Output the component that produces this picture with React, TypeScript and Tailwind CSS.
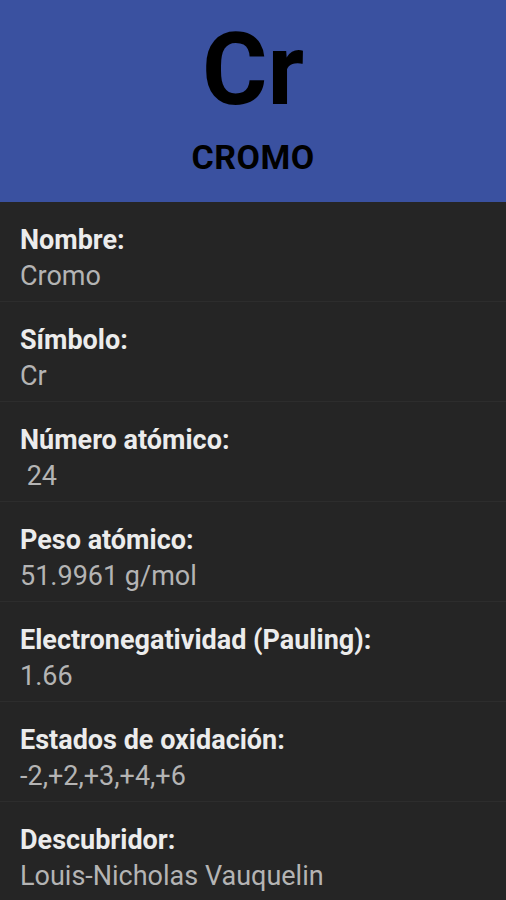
const filas = [
  { etiqueta: 'Nombre:', valor: 'Cromo' },
  { etiqueta: 'Símbolo:', valor: 'Cr' },
  { etiqueta: 'Número atómico:', valor: ' 24' },
  { etiqueta: 'Peso atómico:', valor: '51.9961 g/mol' },
  { etiqueta: 'Electronegatividad (Pauling):', valor: '1.66' },
  { etiqueta: 'Estados de oxidación:', valor: '-2,+2,+3,+4,+6' },
  { etiqueta: 'Descubridor:', valor: 'Louis-Nicholas Vauquelin' },
]

export default function App() {
  return (
    <div className="w-[506px] h-[900px] overflow-hidden bg-[#252525] font-['Roboto',sans-serif]">
      {/* CABECERA */}
      <div className="h-[202px] bg-[#3a51a0] flex flex-col items-center pt-[20px]">
        <div className="text-[100px] leading-[100px] font-bold text-black">Cr</div>
        <div className="mt-[20px] text-[34px] leading-[34px] font-bold text-black tracking-[0.5px]">CROMO</div>
      </div>

      {/* DATOS */}
      <div className="flex flex-col">
        {filas.map((f) => (
          <div key={f.etiqueta} className="h-[100px] px-[20px] pt-[20px] border-b border-[#2d2d2d]">
            <div className="text-[27px] leading-[36px] font-bold text-[#ececec]">{f.etiqueta}</div>
            <div className="text-[27px] leading-[36px] text-[#b4b4b4] whitespace-pre">{f.valor}</div>
          </div>
        ))}
      </div>
    </div>
  )
}
